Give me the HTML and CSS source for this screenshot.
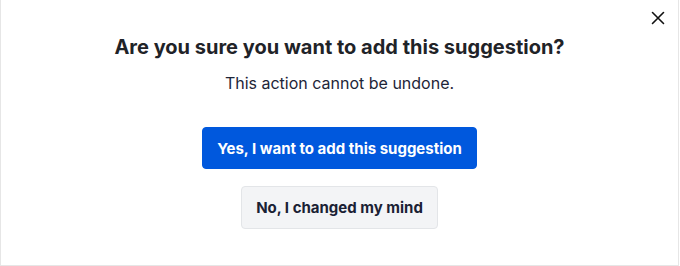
FILE: index.html
```html
<!DOCTYPE html>
<html>
<head>
<meta charset="utf-8">
<link rel="stylesheet" href="styles.css">
</head>
<body>
<div class="modal">
  <button class="close" aria-label="Close">
    <svg width="14" height="14" viewBox="0 0 14 14"><path d="M1.5 1.5 L12.5 12.5 M12.5 1.5 L1.5 12.5" stroke="#111" stroke-width="1.6" stroke-linecap="round" fill="none"/></svg>
  </button>
  <h1 class="title">Are you sure you want to add this suggestion?</h1>
  <p class="desc">This action cannot be undone.</p>
  <div class="actions">
    <button class="btn primary">Yes, I want to add this suggestion</button>
    <button class="btn secondary">No, I changed my mind</button>
  </div>
</div>
</body>
</html>
```
FILE: styles.css
```css
html, body { margin: 0; padding: 0; background: #fff; }
body { font-family: Inter, "Noto Sans", sans-serif; }
.modal {
  position: relative;
  box-sizing: border-box;
  width: 679px;
  height: 266px;
  border: 1px solid #e6e6e6;
  border-top: none;
  display: flex;
  flex-direction: column;
  align-items: center;
  padding-top: 34px;
}
.close {
  position: absolute;
  top: 11px;
  right: 13px;
  background: none;
  border: none;
  padding: 0;
  width: 14px;
  height: 14px;
  cursor: pointer;
}
.close svg { display: block; }
.title {
  margin: 0;
  font-size: 20px;
  font-weight: 700;
  line-height: 26px;
  color: #1f2328;
}
.desc {
  margin: 12px 0 0;
  font-size: 16px;
  line-height: 22px;
  color: #1e2538;
}
.actions {
  display: flex;
  flex-direction: column;
  align-items: center;
  gap: 17px;
  margin-top: 33px;
}
.btn {
  font-family: inherit;
  font-size: 15px;
  font-weight: 700;
  height: 42px;
  border-radius: 4px;
  padding: 0 14px;
  cursor: pointer;
}
.primary {
  background: #0058dd;
  color: #fff;
  border: 1px solid #0058dd;
}
.secondary {
  height: 43px;
  background: #f3f4f6;
  color: #1a2134;
  border: 1px solid #e3e5e8;
}
```
